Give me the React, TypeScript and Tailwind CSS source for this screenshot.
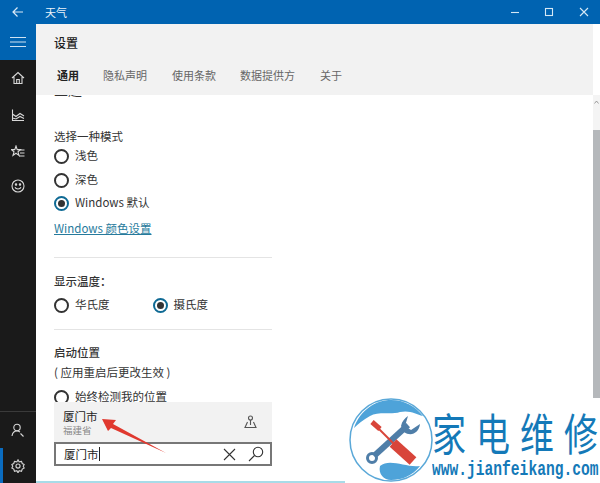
import React from "react";

const font = { fontFamily: '"Noto Sans CJK SC","Liberation Sans",sans-serif' };

function Radio({ checked, label, className = "" }: { checked?: boolean; label: string; className?: string }) {
  return (
    <div className={`flex items-center gap-[6px] h-[16px] ${className}`}>
      {checked ? (
        <span className="w-[15px] h-[15px] rounded-full border-2 border-[#0f6a94] flex items-center justify-center shrink-0">
          <span className="w-[7px] h-[7px] rounded-full bg-[#333]" />
        </span>
      ) : (
        <span className="w-[15px] h-[15px] rounded-full border-2 border-[#333] shrink-0" />
      )}
      <span className="text-[11.5px] text-[#333] leading-none whitespace-nowrap">{label}</span>
    </div>
  );
}

function Nav({ children, className = "" }: { children: React.ReactNode; className?: string }) {
  return <div className={`w-full flex items-center justify-center text-[#d8d8d8] ${className}`}>{children}</div>;
}

const s = { fill: "none", stroke: "currentColor", strokeWidth: 1.1 };

function Logo() {
  return (
    <div className="absolute right-0 bottom-0 w-[255px] h-[85px] bg-white overflow-hidden">
      <svg width="86" height="86" viewBox="0 0 86 86" className="absolute left-[3px] top-0">
        <circle cx="43" cy="42" r="41" fill="#fff" stroke="#5aa8d8" strokeWidth="1.5" />
        <path d="M6 30C12 12 28 2 43 2C56 2 67 8 75 18C68 16 62 12 52 14C44 17 30 13 22 18C15 22 10 26 6 30Z" fill="#4ea3d9" />
        <path d="M32 68C42 60 58 70 72 68C64 78 54 82 43 82C36 82 30 76 32 68Z" fill="#4ea3d9" />
        <path d="M26 58L60 27" stroke="#4f7ea8" strokeWidth="6" />
        <path d="M60 18L57 28L63 32L72 26C71 35 63 39 56 34L53 28C54 23 57 20 60 18Z" fill="#4f7ea8" />
        <circle cx="24" cy="60" r="4.500" fill="none" stroke="#4f7ea8" strokeWidth="3" />
        <path d="M25 25L47 47" stroke="#d8453a" strokeWidth="2" />
        <path d="M24 24L32 31" stroke="#d8453a" strokeWidth="5" />
        <path d="M45 45L65 63" stroke="#d8453a" strokeWidth="10" />
      </svg>
      <div className="absolute left-[87px] top-[13px] flex gap-[10px] text-[#1479b8] text-[34px] leading-[34px] whitespace-nowrap" style={{ fontFamily: '"Noto Sans CJK SC",sans-serif', transform: "scaleY(1.3)", transformOrigin: "top" }}>
        <span>家</span><span>电</span><span>维</span><span>修</span>
      </div>
      <div className="absolute left-[87px] top-[60px] text-[#1479b8] text-[20px] leading-[24px] whitespace-nowrap font-bold" style={{ fontFamily: '"Liberation Mono",monospace', transform: "scaleX(0.73)", transformOrigin: "left" }}>
        www.jianfeikang.com
      </div>
    </div>
  );
}

export default function App() {
  return (
    <div className="relative w-[600px] h-[483px] flex flex-col overflow-hidden bg-white" style={font}>
      <div className="h-6 bg-[#0063b1] flex items-center text-white shrink-0">
        <div className="w-9 flex justify-center">
          <svg width="12" height="12" viewBox="0 0 12 12" {...s} strokeWidth={1.2} className="text-[#dbeaf6]"><path d="M11 6H1M5.5 1.5L1 6l4.5 4.5" /></svg>
        </div>
        <span className="ml-[9px] text-[11px] text-[#eaf3fa]">天气</span>
        <div className="ml-auto flex items-center text-[#d5e8f5]">
          <svg width="10" height="10" viewBox="0 0 10 10" {...s} className="mr-[24px]"><path d="M1 5.5H9" /></svg>
          <svg width="10" height="10" viewBox="0 0 10 10" {...s} className="mr-[25px]"><rect x="1.5" y="1.5" width="7" height="7" /></svg>
          <svg width="10" height="10" viewBox="0 0 10 10" {...s} className="mr-[11px]"><path d="M1 1L9 9M9 1L1 9" /></svg>
        </div>
      </div>

      <div className="flex flex-1 min-h-0">
        <div className="w-9 shrink-0 flex flex-col bg-[#1a1a1a]">
          <Nav className="h-9 bg-[#0063b1] !text-[#cfe3f3]">
            <svg width="16" height="12" viewBox="0 0 16 12" {...s}><path d="M0 1.5H16M0 6H16M0 10.5H16" /></svg>
          </Nav>
          <Nav className="h-[36px]">
            <svg width="14" height="14" viewBox="0 0 14 14" {...s}><path d="M1 7L7 1.5L13 7M3 6V12.5H11V6M5.7 12.5V8.5H8.3V12.5" /></svg>
          </Nav>
          <Nav className="h-[37px]">
            <svg width="14" height="14" viewBox="0 0 14 14" {...s}><path d="M1.5 1.5V12.5H13M1.5 6L5 8.5L9 5.5L13 8M1.5 10L5 11L9 8.5L13 10.5" /></svg>
          </Nav>
          <Nav className="h-[37px]">
            <svg width="14" height="14" viewBox="0 0 14 14" {...s}><path d="M5 1L6.2 4.6H9.5L7 6.8L8 10.5L5 8.3L2 10.5L3 6.8L.5 4.6H3.8Z" /><path d="M9 5H13.5M9 8H13.5M8 11H13.5" /></svg>
          </Nav>
          <Nav className="h-[32px]">
            <svg width="14" height="14" viewBox="0 0 14 14" {...s}><circle cx="7" cy="7" r="6" /><path d="M4 8.2C5 10.6 9 10.6 10 8.2" /><circle cx="5" cy="5.5" r=".7" fill="currentColor" /><circle cx="9" cy="5.5" r=".7" fill="currentColor" /></svg>
          </Nav>
          <div className="mt-auto border-t border-[#3a3a3a]">
            <Nav className="h-[36px]">
              <svg width="14" height="14" viewBox="0 0 14 14" {...s}><circle cx="6" cy="4.5" r="3.2" /><path d="M1 13C1.5 9.5 3.5 8 6 8C7 8 8 8.3 9 9M9.5 10.5L12.5 13.5" /></svg>
            </Nav>
            <Nav className="h-[35px] border-l-[3px] border-[#0a6cc0] pr-[3px] !text-[#d0d0d0]">
              <svg width="14" height="14" viewBox="0 0 24 24" fill="none" stroke="currentColor" strokeWidth="2"><circle cx="12" cy="12" r="3.5" /><path d="M12 1.5l2 3.5 4-1 1.3 3.7 3.2 1.8-1.5 3 1.5 3-3.2 1.8-1.3 3.7-4-1-2 3.5-2-3.5-4 1-1.3-3.7L1.5 15.500l1.5-3-1.500-3L4.700 7.700 6 4l4 1z" /></svg>
            </Nav>
          </div>
        </div>

        <div className="relative flex-1 min-w-0 flex flex-col border-b-2 border-[#a8dbe8]">
          <div className="relative z-10 h-[71px] shrink-0 bg-[#f2f2f2] mr-[7px] pl-[18px]">
            <div className="pt-[11px] text-[12px] leading-[16px] font-medium text-[#222]">设置</div>
            <div className="mt-[16px] flex text-[11px] leading-[16px] text-[#666] whitespace-nowrap">
              <span className="ml-[3px] font-bold text-[#222]">通用</span>
              <span className="ml-[24px]">隐私声明</span>
              <span className="ml-[25px]">使用条款</span>
              <span className="ml-[24px]">数据提供方</span>
              <span className="ml-[25px]">关于</span>
            </div>
          </div>

          <div className="flex-1 min-h-0 flex overflow-hidden">
            <div className="flex-1 pl-[18px] pr-[321px]">
              <div className="-mt-[10px] text-[14px] leading-[8px] text-[#333] whitespace-nowrap">主题</div>
              <div className="mt-[35px] text-[11.5px] leading-[16px] text-[#333] whitespace-nowrap">选择一种模式</div>
              <Radio label="浅色" className="mt-[4px]" />
              <Radio label="深色" className="mt-[8px]" />
              <Radio checked label="Windows 默认" className="mt-[7px]" />
              <div className="mt-[9px] text-[11.5px] leading-[16px] text-[#267a9c] underline whitespace-nowrap">Windows 颜色设置</div>
              <div className="mt-[21px] h-px bg-[#e4e4e4]" />
              <div className="mt-[15px] text-[11.5px] leading-[16px] font-medium text-[#333] whitespace-nowrap">显示温度：</div>
              <div className="mt-[8px] flex">
                <Radio label="华氏度" />
                <Radio checked label="摄氏度" className="ml-[43px]" />
              </div>
              <div className="mt-[16px] h-px bg-[#e4e4e4]" />
              <div className="mt-[14px] text-[11.5px] leading-[16px] font-medium text-[#333] whitespace-nowrap">启动位置</div>
              <div className="mt-[4px] text-[11.5px] leading-[16px] text-[#333] whitespace-nowrap">( 应用重启后更改生效 )</div>
              <Radio label="始终检测我的位置" className="mt-[9px]" />
            </div>
            <div className="w-[7px] shrink-0 flex flex-col bg-[#f4f4f4]">
              <div className="h-[35px] flex justify-center pt-[5px] text-[#888]">
                <svg width="5" height="4" viewBox="0 0 5 4" {...s} strokeWidth={0.8}><path d="M.5 3.500L2.500 1L4.500 3.500" /></svg>
              </div>
              <div className="h-[269px] bg-[#b5b8bb]" />
            </div>
          </div>

          <div className="absolute left-[18px] top-[378px] w-[218px]">
            <div className="h-[40px] bg-[#f2f2f2] flex items-center pl-[9px] pr-[15px]">
              <div>
                <div className="text-[11.500px] leading-[15px] text-[#222]">厦门市</div>
                <div className="text-[9.500px] leading-[12px] text-[#888]">福建省</div>
              </div>
              <svg width="13" height="14" viewBox="0 0 13 14" {...s} className="ml-auto text-[#555]"><circle cx="6.500" cy="3" r="2" /><path d="M6.500 5V10M3.500 7L1 12.500H12L9.500 7" /></svg>
            </div>
            <div className="h-[24px] bg-white border-2 border-[#777] flex items-center pl-[8px] pr-[6px]">
              <span className="text-[11.500px] text-[#222] border-r border-[#222] leading-[14px]">厦门市</span>
              <svg width="13" height="13" viewBox="0 0 13 13" fill="none" stroke="#333" strokeWidth="1.1" className="ml-auto"><path d="M1 1L12 12M12 1L1 12" /></svg>
              <svg width="16" height="16" viewBox="0 0 16 16" fill="none" stroke="#333" strokeWidth="1.100" className="ml-[12px]"><circle cx="10" cy="6" r="4.700" /><path d="M6.500 9.500L1 15" /></svg>
            </div>
          </div>
        </div>
      </div>

      <svg width="70" height="40" viewBox="0 0 70 40" className="absolute left-[100px] top-[417px]">
        <path d="M2 2L16 3L13 7L66 36L11 11L8 14Z" fill="#e0392f" />
      </svg>

      <Logo />
    </div>
  );
}
